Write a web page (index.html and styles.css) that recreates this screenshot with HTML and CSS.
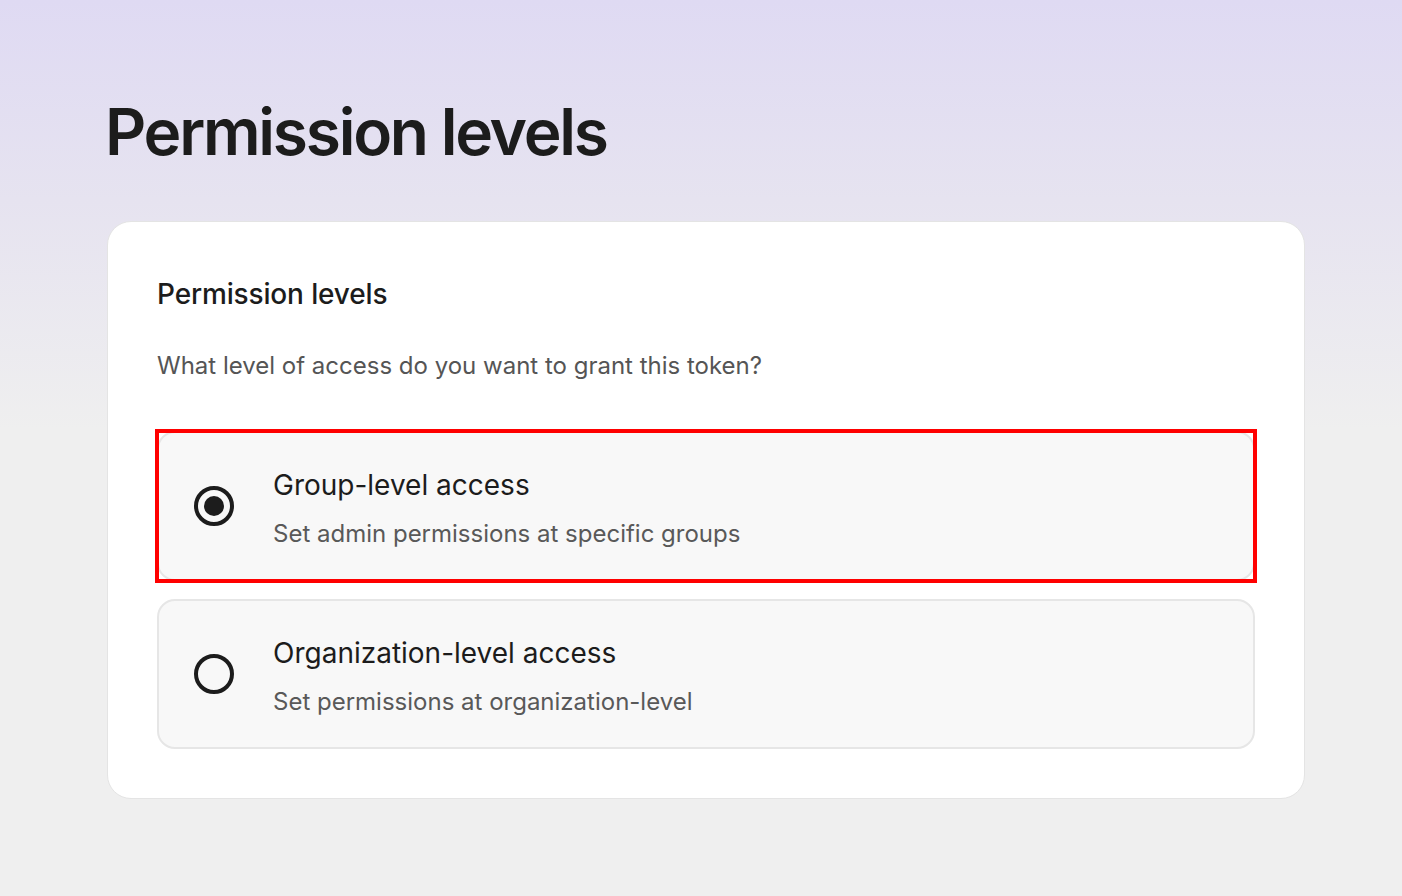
FILE: index.html
```html
<!DOCTYPE html>
<html lang="en">
<head>
<meta charset="utf-8">
<title>Permission levels</title>
<link rel="stylesheet" href="styles.css">
</head>
<body>
<main class="page">
  <h1 class="page-title">Permission levels</h1>
  <section class="card">
    <h2 class="card-title">Permission levels</h2>
    <p class="card-desc">What level of access do you want to grant this token?</p>
    <div class="options">
      <label class="option option-selected">
        <span class="radio radio-checked"><span class="radio-dot"></span></span>
        <span class="option-text">
          <span class="option-title">Group-level access</span>
          <span class="option-sub">Set admin permissions at specific groups</span>
        </span>
      </label>
      <label class="option">
        <span class="radio"></span>
        <span class="option-text">
          <span class="option-title">Organization-level access</span>
          <span class="option-sub">Set permissions at organization-level</span>
        </span>
      </label>
    </div>
  </section>
</main>
</body>
</html>
```
FILE: styles.css
```css
html, body {
  margin: 0;
  padding: 0;
}
body {
  min-height: 896px;
  background: linear-gradient(180deg, #dfdaf3 0px, #e6e3f0 200px, #efefef 430px, #efefef 100%);
  font-family: Inter, "Noto Sans", sans-serif;
  color: #1c1c1c;
}
.page {
  padding: 96px 97px 0 107px;
}
.page-title {
  margin: 0 0 0 -2px;
  font-size: 64px;
  line-height: 72px;
  font-weight: 600;
  letter-spacing: -2.25px;
  color: #1c1c1c;
}
.card {
  margin-top: 53px;
  background: #fff;
  border: 1px solid #e4e4e4;
  border-radius: 24px;
  padding: 54px 49px 49px 49px;
}
.card-title {
  margin: 0;
  font-size: 28px;
  line-height: 36px;
  font-weight: 500;
  letter-spacing: -0.15px;
}
.card-desc {
  margin: 39px 0 0 0;
  font-size: 24px;
  line-height: 30px;
  color: #555;
}
.options {
  margin-top: 50px;
  display: flex;
  flex-direction: column;
  gap: 18px;
}
.option {
  position: relative;
  display: flex;
  align-items: center;
  height: 146px;
  background: #f8f8f8;
  border: 2px solid #e6e6e6;
  border-radius: 18px;
  padding: 0 0 0 35px;
}
.option-selected::after {
  content: "";
  position: absolute;
  top: -4px;
  left: -4px;
  right: -4px;
  bottom: -4px;
  border: 4px solid #ff0000;
  pointer-events: none;
}
.radio {
  flex: none;
  width: 32px;
  height: 32px;
  border: 4px solid #1c1c1c;
  border-radius: 50%;
  display: flex;
  align-items: center;
  justify-content: center;
}
.radio-dot {
  width: 20px;
  height: 20px;
  border-radius: 50%;
  background: #1c1c1c;
}
.option-text {
  display: flex;
  flex-direction: column;
  margin-left: 39px;
  margin-top: 4px;
}
.option-title {
  font-size: 28px;
  line-height: 36px;
  color: #1c1c1c;
}
.option-sub {
  margin-top: 16px;
  font-size: 24px;
  line-height: 30px;
  color: #595959;
}
```
